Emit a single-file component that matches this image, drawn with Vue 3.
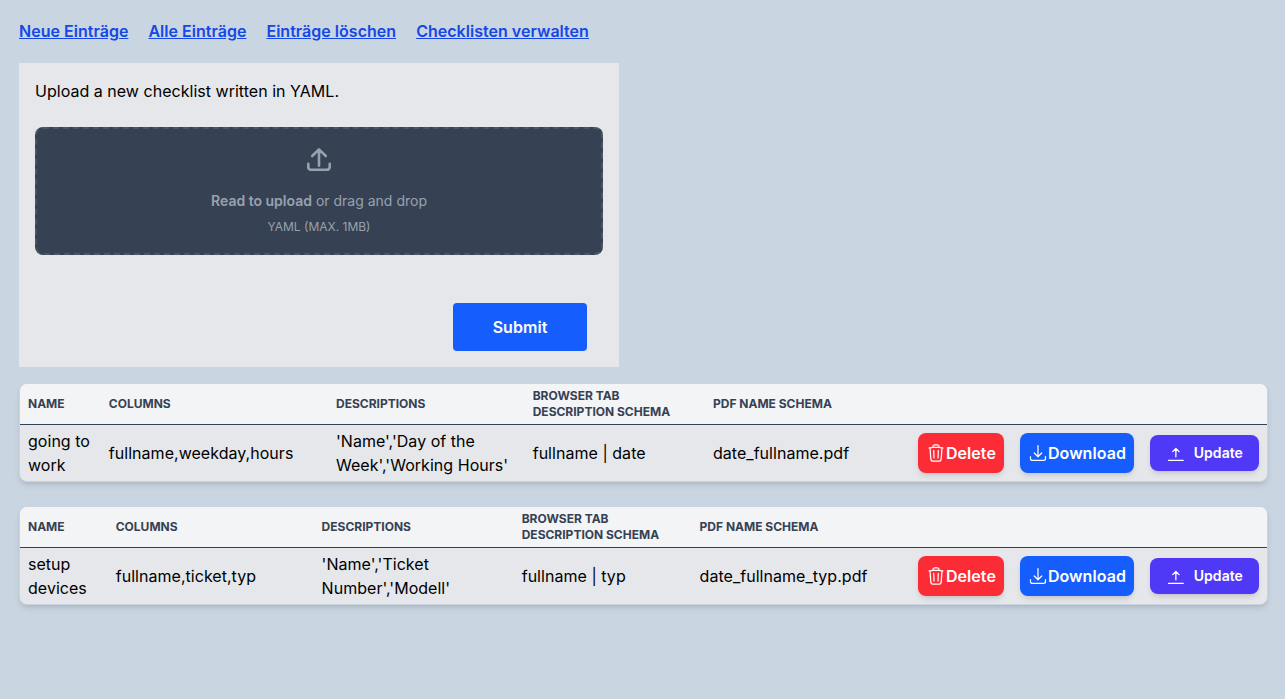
<script setup>
const links = ['Neue Einträge', 'Alle Einträge', 'Einträge löschen', 'Checklisten verwalten']
const headings = ['Name', 'Columns', 'Descriptions', 'Browser Tab Description Schema', 'PDF Name Schema', '']
const checklists = [
  {
    key: 'work',
    cells: ['going to work', 'fullname,weekday,hours', "'Name','Day of the Week','Working Hours'", 'fullname | date', 'date_fullname.pdf'],
  },
  {
    key: 'devices',
    cells: ['setup devices', 'fullname,ticket,typ', "'Name','Ticket Number','Modell'", 'fullname | typ', 'date_fullname_typ.pdf'],
  },
]
</script>

<template>
  <div class="page">
    <nav class="nav">
      <a v-for="link in links" :key="link" href="#">{{ link }}</a>
    </nav>

    <form class="upload" @submit.prevent>
      <p class="intro">Upload a new checklist written in YAML.</p>
      <label class="dropzone">
        <svg class="tray" width="32" height="32" viewBox="0 0 32 32" fill="none" stroke="currentColor" stroke-width="2.6" stroke-linecap="round" stroke-linejoin="round">
          <path d="M5.3 19.8v3.2a2.8 2.8 0 0 0 2.8 2.8h15.8a2.8 2.8 0 0 0 2.8-2.8v-3.2M16 21.8V5.6M9.2 12 16 5.4l6.8 6.6" />
        </svg>
        <span class="prompt"><b>Read to upload</b> or drag and drop</span>
        <span class="hint">YAML (MAX. 1MB)</span>
      </label>
      <button class="submit">Submit</button>
    </form>

    <section v-for="item in checklists" :key="item.key" class="card" :class="item.key">
      <div class="row head">
        <div v-for="h in headings" :key="h">{{ h }}</div>
      </div>
      <div class="row body">
        <div v-for="cell in item.cells" :key="cell">{{ cell }}</div>
        <div class="actions">
          <button class="btn delete">
            <svg width="20" height="20" viewBox="0 0 24 24" fill="none" stroke="currentColor" stroke-width="1.5" stroke-linecap="round" stroke-linejoin="round">
              <path d="m14.74 9-.346 9m-4.788 0L9.26 9m9.968-3.21c.342.052.682.107 1.022.166m-1.022-.165L18.16 19.673a2.25 2.25 0 0 1-2.244 2.077H8.084a2.25 2.25 0 0 1-2.244-2.077L4.772 5.79m14.456 0a48.108 48.108 0 0 0-3.478-.397m-12 .562c.34-.059.68-.114 1.022-.165m0 0a48.11 48.11 0 0 1 3.478-.397m7.5 0v-.916c0-1.18-.91-2.164-2.09-2.201a51.964 51.964 0 0 0-3.32 0c-1.18.037-2.09 1.022-2.09 2.201v.916m7.5 0a48.667 48.667 0 0 0-7.5 0" />
            </svg>
            Delete
          </button>
          <button class="btn download">
            <svg width="20" height="20" viewBox="0 0 24 24" fill="none" stroke="currentColor" stroke-width="1.5" stroke-linecap="round" stroke-linejoin="round">
              <path d="M3 16.5v2.25A2.25 2.25 0 0 0 5.25 21h13.5A2.25 2.25 0 0 0 21 18.75V16.5M16.5 12 12 16.5m0 0L7.5 12m4.5 4.5V3" />
            </svg>
            Download
          </button>
          <button class="btn update">
            <svg width="20" height="20" viewBox="0 0 20 20" fill="none" stroke="currentColor" stroke-linecap="round" stroke-linejoin="round">
              <path d="M10 13.8V5.6M6.8 8.6 10 5.4l3.2 3.2" stroke-width="1.3" />
              <path d="M2.5 17.5h15" stroke-width="1.2" />
            </svg>
            Update
          </button>
        </div>
      </div>
    </section>
  </div>
</template>

<style>
body {
  margin: 0;
  background: #cad5e2;
}
</style>

<style scoped>
* {
  box-sizing: border-box;
}
.page {
  min-height: 699px;
  padding: 19px 17px 0 19px;
  font: 400 16px/24px Inter, sans-serif;
  color: #000;
}
.nav {
  display: flex;
  gap: 20px;
}
.nav a {
  color: #1447e6;
  font-weight: 600;
  letter-spacing: 0.025px;
  text-decoration: underline;
}
.upload {
  display: flex;
  flex-direction: column;
  width: 600px;
  height: 304px;
  margin: 20px 0 16px;
  padding: 16px;
  background: #e5e7eb;
}
.intro {
  margin: 0 0 24px;
  letter-spacing: 0.025px;
}
.dropzone {
  display: flex;
  flex-direction: column;
  align-items: center;
  height: 128px;
  padding-top: 15px;
  border: 2px dashed #4a5565;
  border-radius: 8px;
  background: #364153;
  color: #99a1af;
}
.prompt {
  margin: 15px 0 8px;
  font-size: 14px;
  line-height: 20px;
}
.prompt b {
  font-weight: 600;
}
.hint {
  font-size: 12px;
  line-height: 16px;
}
.submit {
  align-self: flex-end;
  width: 134px;
  height: 48px;
  margin: 48px 16px 0;
  border: 0;
  border-radius: 4px;
  background: #155dfc;
  color: #fff;
  font: 600 16px/24px Inter, sans-serif;
  letter-spacing: 0.04px;
}
.card {
  margin-bottom: 24px;
  overflow: hidden;
  border: 1px solid #cad5e2;
  border-radius: 8px;
  background: #e5e7eb;
  box-shadow: 0 4px 6px -1px rgba(0, 0, 0, 0.1), 0 2px 4px -2px rgba(0, 0, 0, 0.1);
}
.row {
  display: grid;
  align-items: center;
  padding-left: 8px;
}
.work .row {
  grid-template-columns: 80.8px 227.2px 196.7px 180.3px 205px 1fr;
}
.devices .row {
  grid-template-columns: 87.7px 205.9px 200.1px 177.9px 218.4px 1fr;
}
.row > div {
  padding-right: 16px;
}
.head {
  height: 41px;
  border-bottom: 1px solid #314158;
  background: #f3f4f6;
  color: #364153;
  font-size: 12px;
  font-weight: 700;
  line-height: 16px;
  text-transform: uppercase;
}
.body {
  height: 56px;
  letter-spacing: 0.035px;
}
.row > .actions {
  display: flex;
  align-items: center;
  gap: 16px;
  padding-right: 8px;
}
.btn {
  display: flex;
  align-items: center;
  height: 40px;
  padding: 0 8px;
  border: 0;
  border-radius: 8px;
  color: #fff;
  font: 600 16px/24px Inter, sans-serif;
  letter-spacing: 0.06px;
  box-shadow: 0 4px 6px -1px rgba(0, 0, 0, 0.1), 0 2px 4px -2px rgba(0, 0, 0, 0.1);
}
.delete {
  width: 86px;
  background: #fb2c36;
}
.download {
  width: 114px;
  background: #155dfc;
}
.update {
  gap: 8px;
  width: 109px;
  height: 36px;
  padding: 0 16px;
  background: #4f39f6;
  font-size: 14px;
  line-height: 20px;
}
</style>
